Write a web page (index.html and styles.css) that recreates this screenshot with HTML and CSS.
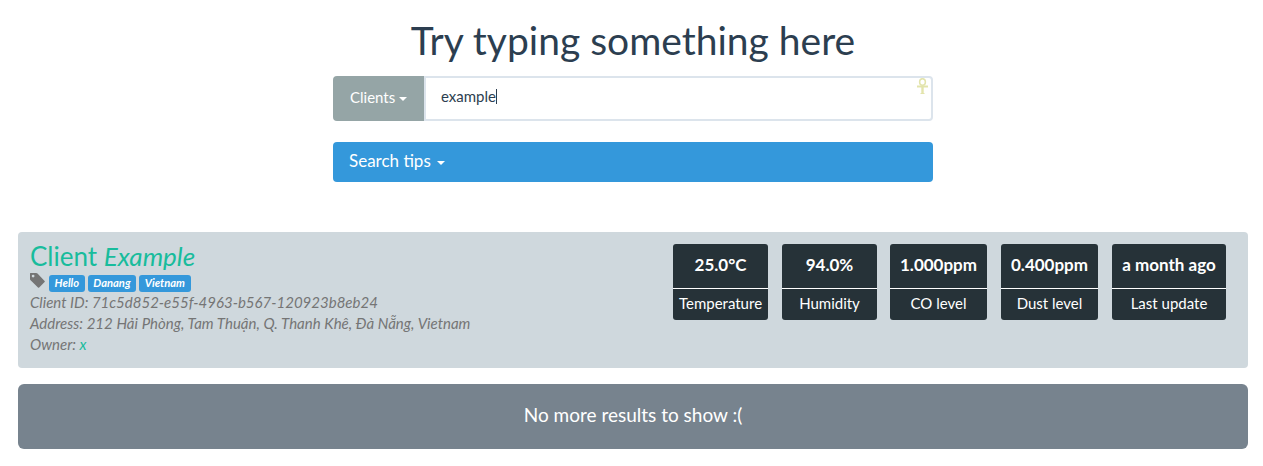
FILE: index.html
```html
<!DOCTYPE html>
<html lang="en">
<head>
<meta charset="utf-8">
<title>Client search</title>
<link rel="stylesheet" href="styles.css">
</head>
<body>
<main class="page">
  <section class="search">
    <h1 class="search-title">Try typing something here</h1>
    <div class="search-group">
      <button class="search-type" type="button">Clients <span class="caret"></span></button>
      <div class="search-input"><span>example</span><span class="cursor"></span>
        <svg class="ankh" viewBox="0 0 12 17" width="12" height="17" fill="none" stroke="#e3e4ac"><ellipse cx="6.500" cy="4" rx="2.900" ry="3.300" stroke-width="1.500"/><path d="M1 8.500h11" stroke-width="2"/><path d="M6.500 8v8" stroke-width="2.400"/><path d="M4.500 15.500h4" stroke-width="1"/></svg>
      </div>
    </div>
    <button class="tips" type="button">Search tips <span class="caret"></span></button>
  </section>

  <article class="client">
    <div class="client-info">
      <h2 class="client-name">Client <em>Example</em></h2>
      <div class="tags">
        <svg class="tag-icon" viewBox="0 0 15 15" width="15" height="15"><path fill="#757575" fill-rule="evenodd" d="M0 .5Q0 0 .5 0H6.200Q6.900 0 7.500.6L14.600 7.900Q15.100 8.500 14.600 9.100L9.200 14.500Q8.600 15 8 14.500L.6 7.300Q0 6.700 0 6ZM3.100 1.700A1.400 1.400 0 1 0 3.100 4.500A1.400 1.400 0 1 0 3.100 1.700Z"/></svg>
        <span class="label">Hello</span>
        <span class="label">Danang</span>
        <span class="label">Vietnam</span>
      </div>
      <p class="detail">Client ID: 71c5d852-e55f-4963-b567-120923b8eb24</p>
      <p class="detail address">Address: 212 Hải Phòng, Tam Thuận, Q. Thanh Khê, Đà Nẵng, Vietnam</p>
      <p class="detail">Owner: <a class="owner">x</a></p>
    </div>
    <div class="stats">
      <div class="stat"><strong class="value">25.0°C</strong><span class="name">Temperature</span></div>
      <div class="stat"><strong class="value">94.0%</strong><span class="name">Humidity</span></div>
      <div class="stat level"><strong class="value">1.000ppm</strong><span class="name">CO level</span></div>
      <div class="stat level"><strong class="value">0.400ppm</strong><span class="name">Dust level</span></div>
      <div class="stat updated"><strong class="value">a month ago</strong><span class="name">Last update</span></div>
    </div>
  </article>

  <div class="end">No more results to show :(</div>
</main>
</body>
</html>
```
FILE: styles.css
```css
* { box-sizing: border-box; }

body {
  margin: 0;
  background: #fff;
  color: #2c3e50;
  font: 15px/21px Lato, sans-serif;
}

.page { width: 1230px; margin-left: 18px; padding-top: 19px; }

.search {
  display: flex;
  flex-direction: column;
  width: 600px;
  margin: 0 auto 50px;
}

.search-title {
  margin: 0 0 14px;
  font-size: 39px;
  font-weight: 400;
  line-height: 43px;
  text-align: center;
  white-space: nowrap;
}

.search-group { display: flex; height: 45px; }

.search-type {
  width: 91px;
  padding: 0 0 2px;
  border: 0;
  border-radius: 4px 0 0 4px;
  background: #95a5a6;
  color: #fff;
  font: inherit;
}

.caret {
  display: inline-block;
  border: 4px solid transparent;
  border-top-color: currentColor;
  border-bottom: 0;
  vertical-align: middle;
}

.search-input {
  position: relative;
  display: flex;
  flex: 1;
  align-items: center;
  padding: 0 15px 4px;
  border: 2px solid #dce4ec;
  border-radius: 0 4px 4px 0;
}

.search-input span:first-child { padding-bottom: 1px; }

.cursor { width: 1px; height: 15px; background: #2c3e50; }

.ankh { position: absolute; top: 0; right: 3px; }

.tips {
  height: 40px;
  margin-top: 21px;
  padding: 0 16px 2px;
  border: 0;
  border-radius: 4px;
  background: #3498db;
  color: #fff;
  font: 17px/24px Lato, sans-serif;
  text-align: left;
}

.tips .caret { margin-left: 2px; }

.client {
  display: flex;
  justify-content: space-between;
  height: 136px;
  padding: 12px 22px 0 12px;
  border-radius: 4px;
  background: #cfd8dd;
}

.client-name {
  margin: -2px 0 0;
  color: #18bc9c;
  font-size: 26px;
  font-weight: 400;
  line-height: 29px;
}

.tags { display: flex; gap: 3px; height: 21px; padding-top: 4px; }

.tag-icon { margin: -2px 1px 0 0; }

.label {
  height: 17px;
  padding: 0 5.6px;
  border-radius: 3px;
  background: #3498db;
  color: #fff;
  font-size: 11.2px;
  font-style: italic;
  font-weight: 700;
  line-height: 16px;
}

.detail { margin: 0; color: #757575; font-style: italic; white-space: nowrap; }

.address { word-spacing: 0.2px; }

.owner { color: #18bc9c; }

.stats { display: flex; gap: 14px; align-items: flex-start; }

.stat {
  width: 95px;
  height: 76px;
  border-radius: 3px;
  background: #263238;
  color: #fff;
  text-align: center;
}

.stat.level { width: 97px; }
.stat.updated { width: 114px; }
.stat:nth-child(3) { margin-left: -1px; }

.value {
  display: block;
  height: 45px;
  border-bottom: 1px solid #fff;
  font-size: 17px;
  line-height: 41px;
}

.name { display: block; line-height: 28px; }

.end {
  height: 65px;
  margin-top: 16px;
  border-radius: 6px;
  background: #77838e;
  color: #fff;
  font-size: 19px;
  line-height: 61px;
  text-align: center;
}
```
